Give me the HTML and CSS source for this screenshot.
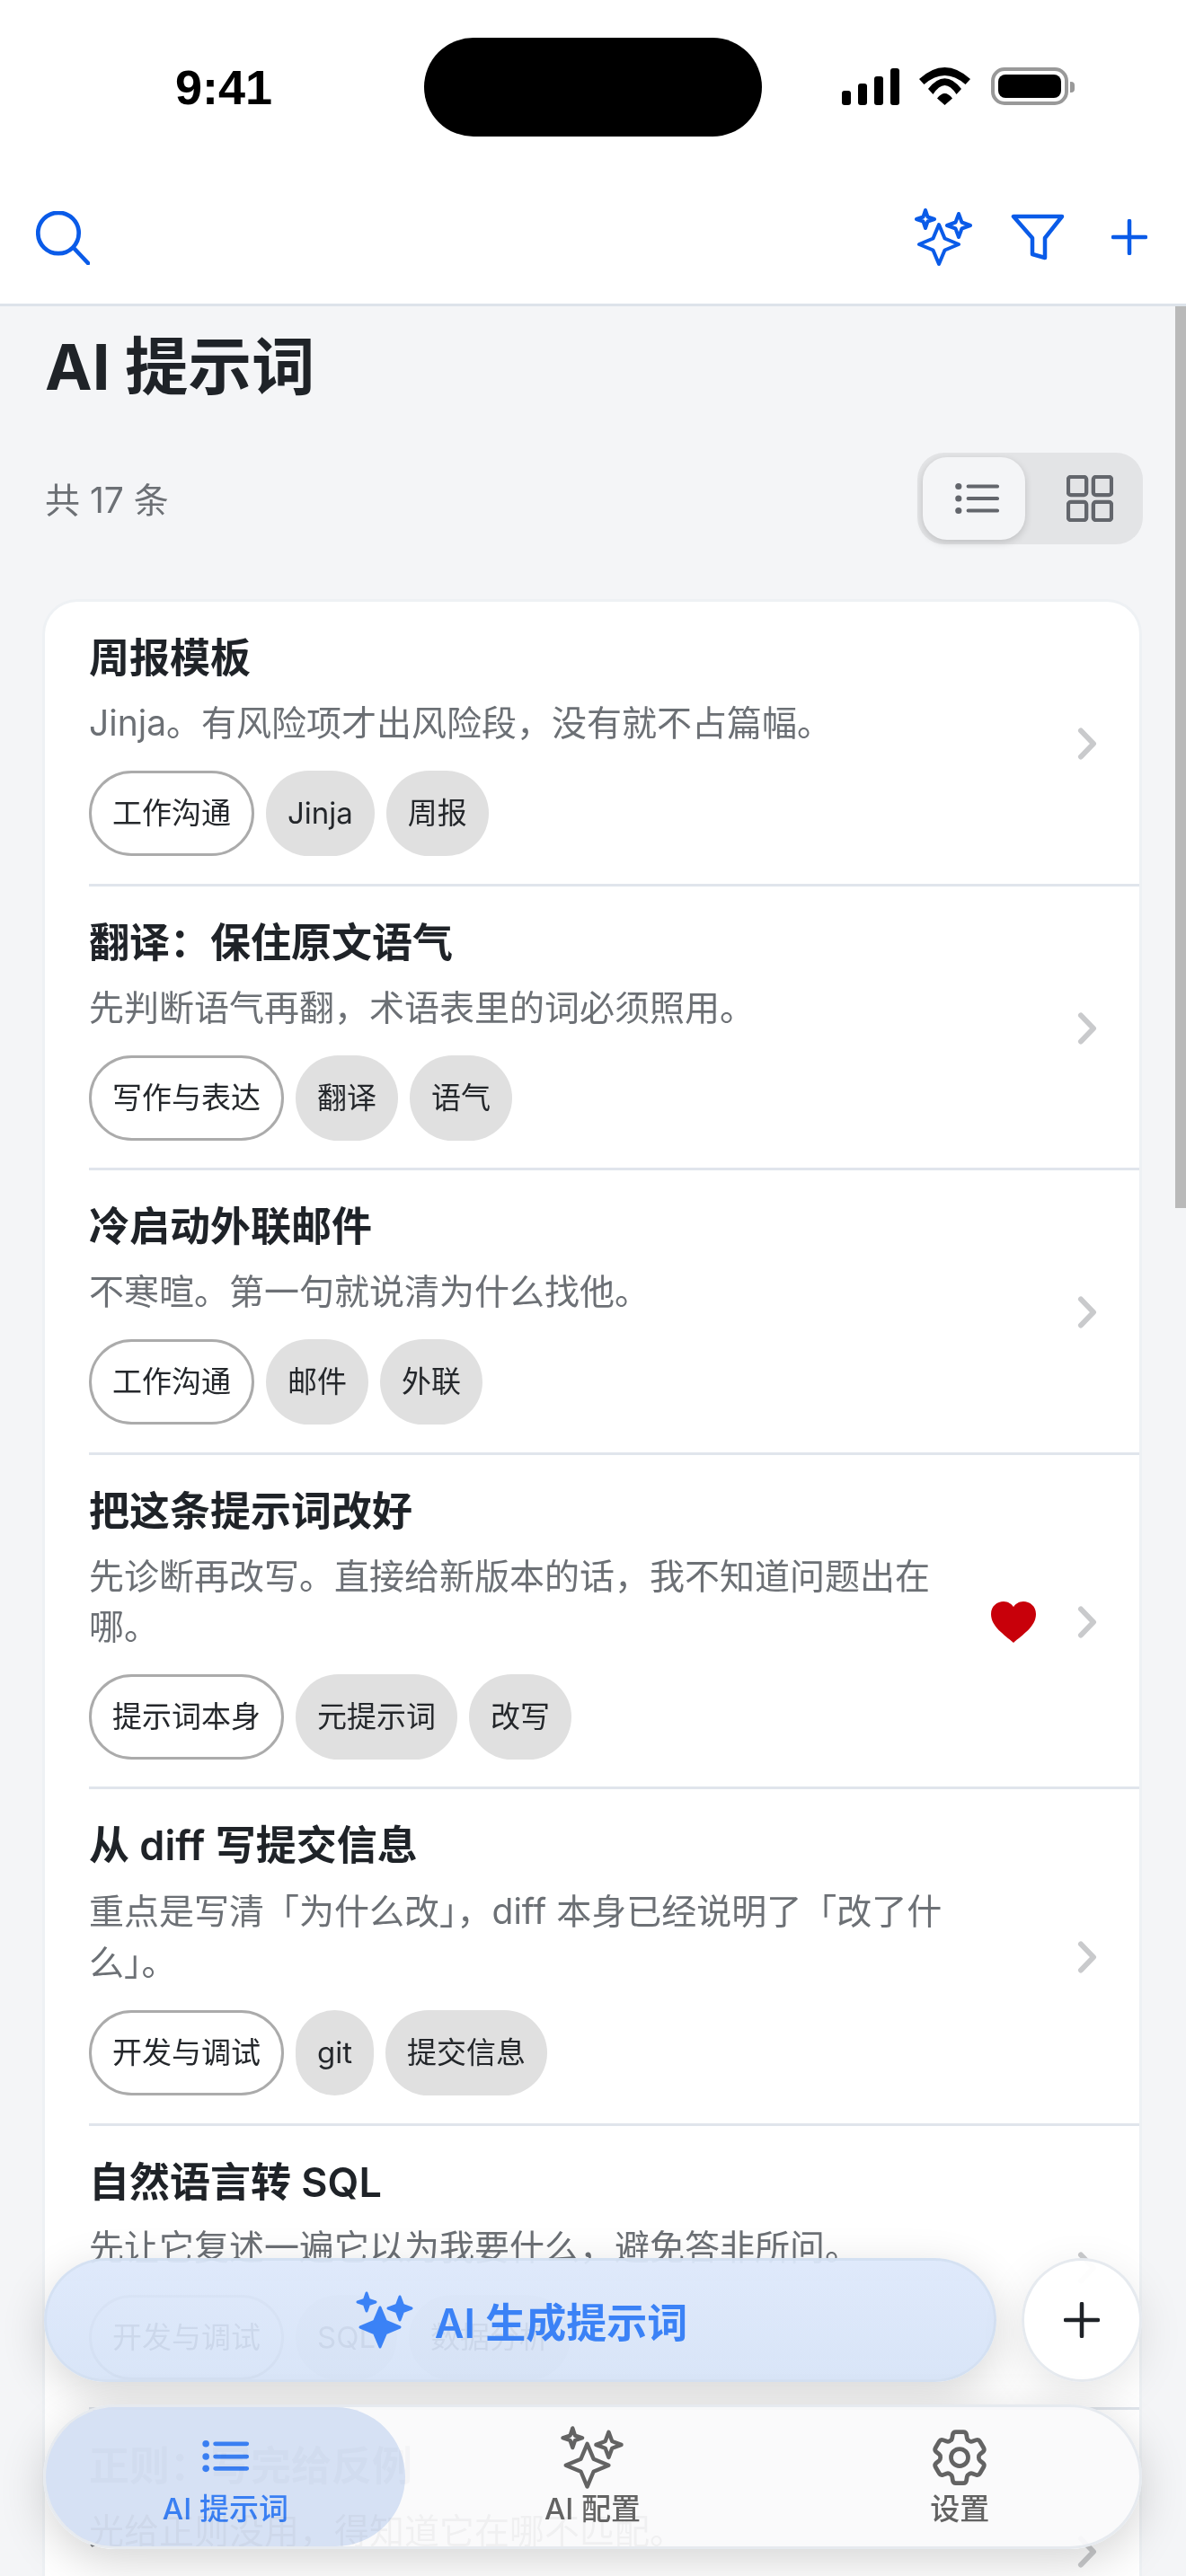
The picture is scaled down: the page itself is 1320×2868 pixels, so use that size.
FILE: index.html
```html
<!DOCTYPE html>
<html lang="zh-CN">
<head>
<meta charset="utf-8">
<title>AI 提示词</title>
<link rel="stylesheet" href="styles.css">
</head>
<body>
<svg class="defs" width="0" height="0" aria-hidden="true">
  <defs>
    <path id="sparkles" d="M30 20 36.5 35.5 52 42 36.5 48.5 30 64 23.5 48.5 8 42 23.5 35.5ZM15 4 17.5 11.5 25 14 17.5 16.5 15 24 12.5 16.5 5 14 12.5 11.5ZM52 8 55.5 17.5 65 21 55.5 24.5 52 34 48.5 24.5 39 21 48.5 17.5Z"/>
  </defs>
</svg>
<div class="screen">
  <header class="top">
    <div class="status">
      <span class="time">9:41</span>
      <div class="island"></div>
      <div class="status-icons">
        <div class="signal"><i class="b1"></i><i class="b2"></i><i class="b3"></i><i class="b4"></i></div>
        <svg class="wifi" viewBox="0 0 58 42"><path d="M0 13Q28.5-13 57 13L51.5 19Q28.5-1 5.5 19ZM10 24Q28.5 .6 47 24L41.5 30Q28.5 10 15.5 30ZM28.5 42 20 34.5Q28.5 23.5 37 34.5Z" fill="#000"/></svg>
        <div class="battery"><div class="cell"></div></div>
        <div class="nub"></div>
      </div>
    </div>
    <nav class="toolbar">
      <svg class="ic-search" viewBox="0 0 60 60"><circle cx="25" cy="24.5" r="22.7" /><path d="M42 41 58 58"/></svg>
      <div class="tool-right">
        <svg class="ic-spark" viewBox="0 0 70 68"><use href="#sparkles"/></svg>
        <svg class="ic-funnel" viewBox="0 0 60 52"><path d="M3 3H57L38 27V49L24 45V27Z"/></svg>
        <svg class="ic-plus" viewBox="0 0 40 40"><path d="M20 2V38M2 20H38"/></svg>
      </div>
    </nav>
  </header>

  <main class="content">
    <h1 class="title">AI 提示词</h1>
    <div class="meta">
      <span class="count">共 17 条</span>
      <div class="toggle">
        <div class="seg seg-on">
          <svg class="ic-list" viewBox="0 0 54 40"><circle cx="4" cy="5" r="4"/><circle cx="4" cy="20" r="4"/><circle cx="4" cy="35" r="4"/><path d="M16 5H52M16 20H52M16 35H52"/></svg>
        </div>
        <div class="seg seg-off">
          <svg class="ic-grid" viewBox="0 0 54 54"><rect x="2" y="2" width="21" height="21" rx="3"/><rect x="31" y="2" width="21" height="21" rx="3"/><rect x="2" y="31" width="21" height="21" rx="3"/><rect x="31" y="31" width="21" height="21" rx="3"/></svg>
        </div>
      </div>
    </div>

    <section class="card">
      <article class="row">
        <div class="main">
          <h2 class="name">周报模板</h2>
          <p class="desc">Jinja。有风险项才出风险段，没有就不占篇幅。</p>
          <div class="tags"><span class="tag tag-cat">工作沟通</span><span class="tag">Jinja</span><span class="tag">周报</span></div>
        </div>
        <div class="actions"><svg class="chev" viewBox="0 0 24 40"><path d="M6 5.5 20 20 6 34.5"/></svg></div>
      </article>
      <article class="row">
        <div class="main">
          <h2 class="name">翻译：保住原文语气</h2>
          <p class="desc">先判断语气再翻，术语表里的词必须照用。</p>
          <div class="tags"><span class="tag tag-cat">写作与表达</span><span class="tag">翻译</span><span class="tag">语气</span></div>
        </div>
        <div class="actions"><svg class="chev" viewBox="0 0 24 40"><path d="M6 5.5 20 20 6 34.5"/></svg></div>
      </article>
      <article class="row">
        <div class="main">
          <h2 class="name">冷启动外联邮件</h2>
          <p class="desc">不寒暄。第一句就说清为什么找他。</p>
          <div class="tags"><span class="tag tag-cat">工作沟通</span><span class="tag">邮件</span><span class="tag">外联</span></div>
        </div>
        <div class="actions"><svg class="chev" viewBox="0 0 24 40"><path d="M6 5.5 20 20 6 34.5"/></svg></div>
      </article>
      <article class="row">
        <div class="main">
          <h2 class="name">把这条提示词改好</h2>
          <p class="desc">先诊断再改写。直接给新版本的话，我不知道问题出在哪。</p>
          <div class="tags"><span class="tag tag-cat">提示词本身</span><span class="tag">元提示词</span><span class="tag">改写</span></div>
        </div>
        <div class="actions">
          <svg class="heart" viewBox="0 0 50 46"><path d="M25 46C15 37 0 28 0 14 0 5 7 0 14 0 19 0 23 3 25 6 27 3 31 0 36 0 43 0 50 5 50 14 50 28 35 37 25 46Z"/></svg>
          <svg class="chev" viewBox="0 0 24 40"><path d="M6 5.5 20 20 6 34.5"/></svg>
        </div>
      </article>
      <article class="row">
        <div class="main">
          <h2 class="name">从 diff 写提交信息</h2>
          <p class="desc desc-tall">重点是写清「为什么改」，diff 本身已经说明了「改了什么」。</p>
          <div class="tags"><span class="tag tag-cat">开发与调试</span><span class="tag">git</span><span class="tag">提交信息</span></div>
        </div>
        <div class="actions"><svg class="chev" viewBox="0 0 24 40"><path d="M6 5.5 20 20 6 34.5"/></svg></div>
      </article>
      <article class="row">
        <div class="main">
          <h2 class="name">自然语言转 SQL</h2>
          <p class="desc">先让它复述一遍它以为我要什么，避免答非所问。</p>
          <div class="tags"><span class="tag tag-cat">开发与调试</span><span class="tag">SQL</span><span class="tag">数据分析</span></div>
        </div>
        <div class="actions"><svg class="chev" viewBox="0 0 24 40"><path d="M6 5.5 20 20 6 34.5"/></svg></div>
      </article>
      <article class="row row-under">
        <div class="main">
          <h2 class="name">正则：写完给反例</h2>
          <p class="desc">光给正则没用，得知道它在哪不匹配。</p>
        </div>
        <div class="actions"><svg class="chev" viewBox="0 0 24 40"><path d="M6 5.5 20 20 6 34.5"/></svg></div>
      </article>
    </section>
  </main>

  <div class="scrollbar"></div>

  <div class="dock">
    <div class="fab-row">
      <div class="fab">
        <svg class="ic-spark-fill" viewBox="0 0 70 68"><use href="#sparkles"/></svg>
        <span>AI 生成提示词</span>
      </div>
      <div class="round">
        <svg class="ic-plus-dark" viewBox="0 0 40 40"><path d="M20 2V38M2 20H38"/></svg>
      </div>
    </div>
    <div class="tabbar">
      <div class="tab tab-on">
        <svg class="ic-tab-list" viewBox="0 0 54 40"><circle cx="4" cy="4" r="4"/><circle cx="4" cy="19" r="4"/><circle cx="4" cy="33" r="4"/><path d="M15 4H52M15 19H52M15 33H52"/></svg>
        <span>AI 提示词</span>
      </div>
      <div class="tab">
        <svg class="ic-tab-spark" viewBox="0 0 70 68"><use href="#sparkles"/></svg>
        <span>AI 配置</span>
      </div>
      <div class="tab">
        <svg class="ic-gear" viewBox="0 0 24 24"><path d="M9.594 3.94c.09-.542.56-.94 1.11-.94h2.593c.55 0 1.02.398 1.11.94l.213 1.281c.063.374.313.686.645.87.074.04.147.083.22.127.325.196.72.257 1.075.124l1.217-.456a1.125 1.125 0 0 1 1.37.49l1.296 2.247a1.125 1.125 0 0 1-.26 1.431l-1.003.827c-.293.241-.438.613-.43.992a7.723 7.723 0 0 1 0 .255c-.008.378.137.75.43.991l1.004.827c.424.35.534.955.26 1.43l-1.298 2.247a1.125 1.125 0 0 1-1.369.491l-1.217-.456c-.355-.133-.75-.072-1.076.124a6.47 6.47 0 0 1-.22.128c-.331.183-.581.495-.644.869l-.213 1.281c-.09.543-.56.94-1.11.94h-2.594c-.55 0-1.019-.398-1.11-.94l-.213-1.281c-.062-.374-.312-.686-.644-.87a6.52 6.52 0 0 1-.22-.127c-.325-.196-.72-.257-1.076-.124l-1.217.456a1.125 1.125 0 0 1-1.369-.49l-1.297-2.247a1.125 1.125 0 0 1 .26-1.431l1.004-.827c.292-.24.437-.613.43-.991a6.932 6.932 0 0 1 0-.255c.007-.38-.138-.751-.43-.992l-1.004-.827a1.125 1.125 0 0 1-.26-1.43l1.297-2.247a1.125 1.125 0 0 1 1.37-.491l1.216.456c.356.133.751.072 1.076-.124.072-.044.146-.086.22-.128.332-.183.582-.495.644-.869l.214-1.28Z"/><circle cx="12" cy="12" r="3"/></svg>
        <span>设置</span>
      </div>
    </div>
  </div>
</div>
</body>
</html>
```

FILE: styles.css
```css
* { box-sizing: border-box; }
html, body { margin: 0; padding: 0; }
body {
  width: 1320px;
  height: 2868px;
  overflow: hidden;
  background: #f4f5f7;
  font-family: Inter, "Noto Sans CJK SC", sans-serif;
  color: #1f2328;
}
.defs { position: absolute; }
.screen { position: relative; width: 1320px; height: 2868px; overflow: hidden; display: flex; flex-direction: column; }

/* header */
.top { background: #fff; border-bottom: 3px solid #dde3ea; height: 341px; flex: none; }
.status { height: 195px; display: flex; align-items: flex-start; padding: 42px 122px 0 195px; }
.time {
  font: 700 54px/60px "Liberation Sans", sans-serif;
  color: #000;
  width: 277px;
  margin-top: 25px;
}
.island { width: 376px; height: 110px; border-radius: 55px; background: #000; }
.status-icons { display: flex; align-items: flex-end; margin-left: 89px; margin-top: 33px; height: 42px; }
.signal { display: flex; align-items: flex-end; gap: 8px; height: 42px; }
.signal i { display: block; width: 10px; background: #000; border-radius: 3px; }
.b1 { height: 16px; } .b2 { height: 24px; } .b3 { height: 32px; } .b4 { height: 41px; }
.wifi { width: 58px; height: 42px; margin-left: 22px; }
.battery { width: 86px; height: 42px; margin-left: 22px; border: 4px solid #999; border-radius: 15px; padding: 4px; }
.cell { width: 100%; height: 100%; background: #000; border-radius: 8px; }
.nub { width: 5px; height: 12px; margin: 0 0 14px 2px; background: #999; border-radius: 0 4px 4px 0; }

.toolbar { height: 143px; display: flex; align-items: flex-start; justify-content: space-between; padding: 0 43px 0 40px; }
.ic-search { width: 60px; height: 60px; margin-top: 40px; fill: none; stroke: #0a5be8; stroke-width: 4.7; stroke-linecap: round; }
.tool-right { display: flex; align-items: flex-start; }
.ic-spark { width: 70px; height: 68px; margin-top: 35px; fill: none; stroke: #0a5be8; stroke-width: 4; stroke-linejoin: round; }
.ic-funnel { width: 60px; height: 52px; margin: 43px 0 0 40px; fill: none; stroke: #0a5be8; stroke-width: 4.5; stroke-linejoin: round; }
.ic-plus { width: 40px; height: 40px; margin: 49px 0 0 52px; fill: none; stroke: #0a5be8; stroke-width: 4.5; stroke-linecap: round; }

/* content */
.content { flex: 1; padding: 0 52px 0 50px; min-height: 0; overflow: hidden; }
.title { margin: 32px 0 0; font-size: 70.5px; line-height: 72px; font-weight: 700; color: #1f2328; }
.meta { margin-top: 59px; display: flex; align-items: center; justify-content: space-between; height: 102px; }
.count { font-size: 39px; color: #6c7075; padding-bottom: 3px; }
.toggle { width: 251px; height: 102px; background: #e3e4e6; border-radius: 30px; padding: 5px 6px; display: flex; margin-right: -4px; }
.seg { width: 114px; height: 92px; border-radius: 27px; display: flex; align-items: center; justify-content: center; }
.seg-off { width: 125px; padding-left: 18px; }
.seg-on { background: #f4f5f7; box-shadow: 0 3px 9px rgba(0,0,0,.16); padding-left: 6px; }
.ic-list { width: 49px; height: 36px; fill: #63666c; stroke: #63666c; }
.ic-list circle { stroke: none; }
.ic-list path { stroke-width: 4.5; stroke-linecap: round; fill: none; }
.ic-grid { width: 52px; height: 52px; fill: none; stroke: #63666c; stroke-width: 4.5; }

.card { margin: 61px -3px 0; background: #fff; border: 3px solid #eef1f4; border-bottom: 0; border-radius: 39px 39px 0 0; }
.row { display: flex; align-items: center; margin-left: 49px; padding: 33px 47px 30.5px 0; border-bottom: 3px solid #e0e5ec; }
.main { flex: 1; min-width: 0; }
.name { margin: 0; font-size: 45px; line-height: 60px; font-weight: 600; color: #1f2328; }
.row-under { min-height: 316px; }
.row-under .main { align-self: flex-start; }
.row-under .name { color: #a8abb0; }
.desc { margin: 14px 0 0; font-size: 39px; line-height: 56px; color: #6c7075; }
.desc-tall { line-height: 57px; }
.tags { margin-top: 25px; display: flex; gap: 13px; }
.tag { height: 95px; padding: 0 24px; border-radius: 48px; background: #e0e0e0; color: #24272b; font-size: 33px; line-height: 95px; }
.tag-cat { background: #fff; border: 3px solid #ababab; padding: 0 23px; line-height: 89px; }
.actions { flex: none; width: 155px; display: flex; align-items: center; justify-content: flex-end; }
.heart { width: 50px; height: 46px; fill: #c8000a; margin-right: 44px; }
.chev { width: 24px; height: 40px; fill: none; stroke: #c9cacc; stroke-width: 6; stroke-linecap: round; stroke-linejoin: round; }

.scrollbar { position: absolute; right: 0; top: 341px; width: 12px; height: 1004px; background: #b9b9b9; }

/* dock */
.dock { position: absolute; left: 48px; right: 49px; bottom: 30px; display: flex; flex-direction: column; gap: 25px; }
.fab-row { display: flex; gap: 28px; padding-left: 1px; }
.fab {
  flex: 1;
  height: 138px;
  border-radius: 69px;
  background: linear-gradient(180deg, rgba(221,232,251,.94), rgba(214,227,247,.93));
  border: 3px solid rgba(210,222,240,.7);
  box-shadow: 0 14px 50px rgba(0,0,0,.16);
  display: flex;
  align-items: center;
  justify-content: center;
  gap: 21px;
  color: #3b82f6;
  font-size: 45px;
  font-weight: 600;
}
.ic-spark-fill { width: 70px; height: 68px; fill: #3b82f6; stroke: #3b82f6; stroke-width: 3; stroke-linejoin: round; }
.round {
  width: 134px;
  height: 138px;
  border-radius: 50%;
  flex: none;
  background: rgba(255,255,255,.96);
  border: 3px solid #e6eaef;
  box-shadow: 0 14px 50px rgba(0,0,0,.1);
  display: flex;
  align-items: center;
  justify-content: center;
}
.ic-plus-dark { width: 40px; height: 40px; fill: none; stroke: #1f2328; stroke-width: 4.5; stroke-linecap: round; }
.tabbar {
  height: 161px;
  border-radius: 81px;
  background: rgba(250,250,251,.93);
  border: 3px solid #e6eaef;
  box-shadow: 0 14px 50px rgba(0,0,0,.17);
  display: grid;
  grid-template-columns: repeat(3, 1fr);
  column-gap: 9px;
}
.tab { display: flex; flex-direction: column; align-items: center; justify-content: flex-end; padding-bottom: 21px; border-radius: 78px; color: #636363; font-size: 33px; line-height: 42px; font-weight: 500; }
.tab span { display: block; }
.tab-on { background: #dbe6f8; color: #3b82f6; mix-blend-mode: multiply; }
.ic-tab-list { width: 54px; height: 38px; margin-bottom: 17px; fill: #3b82f6; }
.ic-tab-list path { stroke: #3b82f6; stroke-width: 5; stroke-linecap: round; fill: none; }
.ic-tab-spark { width: 76px; height: 74px; margin-bottom: -1px; fill: none; stroke: #636363; stroke-width: 4; stroke-linejoin: round; }
.ic-gear { width: 76px; height: 76px; margin-bottom: -2px; fill: none; stroke: #636363; stroke-width: 1.5; stroke-linejoin: round; }
```
